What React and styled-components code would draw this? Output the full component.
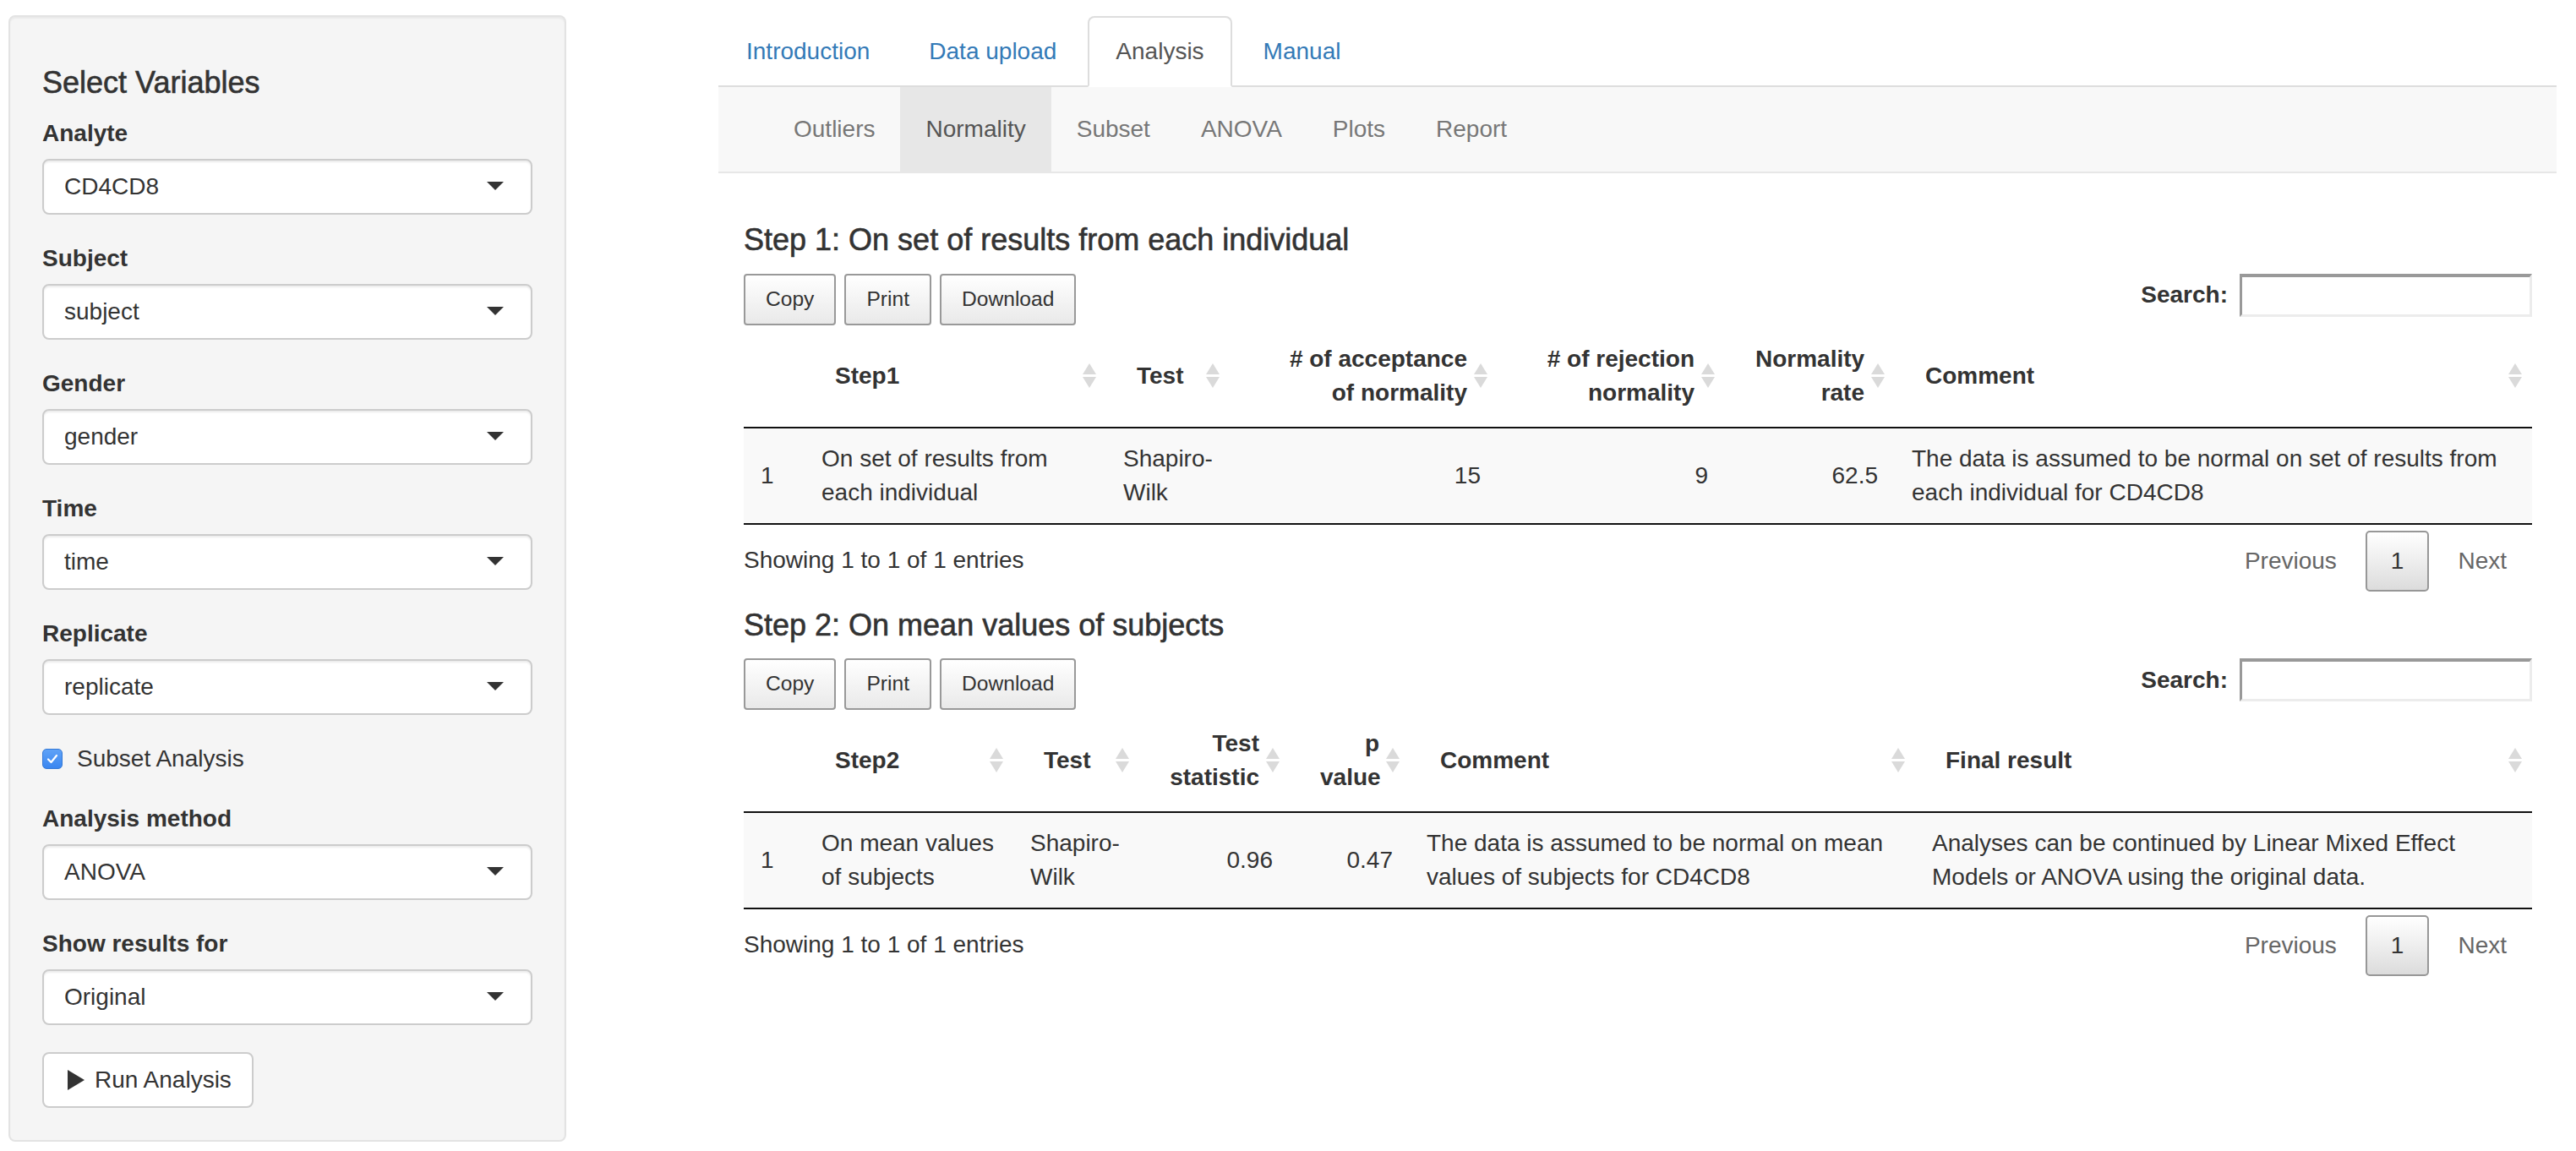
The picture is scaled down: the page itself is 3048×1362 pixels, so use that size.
import React from "react";
import styled, { createGlobalStyle, css } from "styled-components";

const GlobalStyle = createGlobalStyle`
  html, body { margin: 0; padding: 0; background: #fff; }
  body {
    font-family: "Liberation Sans", Arial, Helvetica, sans-serif;
    color: #333;
    font-size: 28px;
    line-height: 40px;
  }
  *, *::before, *::after { box-sizing: border-box; }
`;

const Page = styled.div`
  display: grid;
  grid-template-columns: 660px 1fr;
  column-gap: 180px;
  align-items: start;
  padding: 18px 23px 0 10px;
`;

/* ---------- Sidebar ---------- */
const Well = styled.aside`
  background: #f5f5f5;
  border: 2px solid #e3e3e3;
  border-radius: 8px;
  box-shadow: inset 0 2px 2px rgba(0, 0, 0, 0.05);
  padding: 38px;
`;

const headingStyle = css`
  font-size: 36px;
  font-weight: 500;
  line-height: 1.1;
  -webkit-text-stroke: 0.6px currentColor;
`;

const PanelTitle = styled.h4`
  margin: 20px 0 20px;
  ${headingStyle}
`;

const FormGroup = styled.div`
  margin-bottom: 32px;
`;

const FieldLabel = styled.label`
  display: block;
  font-weight: 700;
  line-height: 40px;
  margin-bottom: 10px;
`;

const SelectBox = styled.div`
  position: relative;
  display: flex;
  align-items: center;
  height: 66px;
  padding: 0 24px;
  background: #fff;
  border: 2px solid #ccc;
  border-radius: 8px;
  box-shadow: inset 0 2px 2px rgba(0, 0, 0, 0.075);
  color: #333;
`;

const Caret = styled.span`
  position: absolute;
  right: 32px;
  top: 50%;
  margin-top: -6px;
  width: 0;
  height: 0;
  border-style: solid;
  border-width: 10px 10px 0 10px;
  border-color: #333 transparent transparent transparent;
`;

const CheckRow = styled.label`
  display: flex;
  align-items: center;
  gap: 17px;
  height: 40px;
  margin-bottom: 31px;
`;

const CheckBox = styled.span`
  display: inline-flex;
  align-items: center;
  justify-content: center;
  width: 24px;
  height: 24px;
  border-radius: 5px;
  background: linear-gradient(to bottom, #5fa2f7, #3a86f0);
  border: 1px solid #3579d6;
`;

const ActionButton = styled.button`
  display: inline-flex;
  align-items: center;
  height: 66px;
  padding: 0 24px;
  background: #fff;
  border: 2px solid #ccc;
  border-radius: 8px;
  color: #333;
  font-family: inherit;
  font-size: 28px;
  line-height: 40px;
`;

const PlayIcon = styled.svg`
  width: 28px;
  height: 28px;
  margin-right: 8px;
  fill: #333;
`;

/* ---------- Main ---------- */
const Main = styled.main`
  display: flex;
  flex-direction: column;
  min-width: 0;
`;

const TabBar = styled.ul`
  display: flex;
  list-style: none;
  margin: 1px 0 0;
  padding: 0;
  border-bottom: 2px solid #ddd;
`;

const TabItem = styled.li`
  margin-bottom: -2px;
  margin-right: 4px;
`;

const TabLink = styled.a`
  display: block;
  padding: 20px 31px;
  line-height: 40px;
  border: 2px solid transparent;
  border-radius: 8px 8px 0 0;
  color: #337ab7;
  text-decoration: none;
  ${(p) =>
    p.$active &&
    css`
      color: #555;
      background: #fff;
      border-color: #ddd #ddd transparent;
    `}
`;

const SubNav = styled.ul`
  display: flex;
  list-style: none;
  margin: 0;
  padding: 0 0 0 59px;
  background: #f8f8f8;
  border-bottom: 2px solid #e7e7e7;
`;

const SubNavLink = styled.a`
  display: block;
  padding: 30px;
  line-height: 40px;
  color: #777;
  text-decoration: none;
  ${(p) =>
    p.$active &&
    css`
      color: #555;
      background: #e7e7e7;
    `}
`;

const Content = styled.div`
  padding: 39px 29px 0 30px;
`;

const SectionTitle = styled.h4`
  margin: 20px 0 20px;
  ${headingStyle}
`;

const Toolbar = styled.div`
  display: flex;
  justify-content: space-between;
  align-items: flex-start;
`;

const ButtonGroup = styled.div`
  display: flex;
  gap: 10px;
`;

const DtButton = styled.button`
  height: 61px;
  padding: 0 24px;
  font-family: inherit;
  font-size: 24.6px;
  line-height: 1;
  color: #333;
  border: 2px solid #999;
  border-radius: 4px;
  background: linear-gradient(to bottom, #ffffff 0%, #e9e9e9 100%);
`;

const SearchLabel = styled.label`
  display: flex;
  align-items: center;
  font-weight: 700;
  height: 51px;
`;

const SearchInput = styled.input`
  width: 346px;
  height: 51px;
  margin-left: 14px;
  background: #fff;
  border-style: solid;
  border-width: 4px 3px 3px 3px;
  border-color: #999 #ececec #ececec #999;
  font-family: inherit;
  font-size: 28px;
  outline: none;
`;

const DataTable = styled.table`
  width: 100%;
  table-layout: fixed;
  border-collapse: separate;
  border-spacing: 0;
`;

const HeadCell = styled.th`
  position: relative;
  padding: 20px 36px;
  font-weight: 700;
  line-height: 40px;
  text-align: ${(p) => p.$align};
  vertical-align: middle;
  white-space: nowrap;
  border-bottom: 2px solid #111;
  ${(p) =>
    p.$sortable &&
    css`
      &::before,
      &::after {
        content: "";
        position: absolute;
        right: 12px;
        width: 0;
        height: 0;
        border-left: 8.5px solid transparent;
        border-right: 8.5px solid transparent;
      }
      &::before {
        top: calc(50% - 15px);
        border-bottom: 13px solid #dadada;
      }
      &::after {
        top: calc(50% + 1px);
        border-top: 13px solid #dadada;
      }
    `}
`;

const BodyCell = styled.td`
  padding: 16px 20px;
  line-height: 40px;
  text-align: ${(p) => p.$align};
  vertical-align: middle;
  background: #f9f9f9;
  border-bottom: 2px solid #111;
`;

const FooterBar = styled.div`
  display: flex;
  justify-content: space-between;
  align-items: flex-start;
`;

const Info = styled.div`
  padding-top: 22px;
  line-height: 40px;
`;

const Pager = styled.div`
  display: flex;
  gap: 4px;
  padding-top: 7px;
`;

const PageButton = styled.a`
  display: block;
  padding: 14px 28px;
  line-height: 40px;
  border: 2px solid transparent;
  border-radius: 5px;
  color: #666;
  text-decoration: none;
  ${(p) =>
    p.$current &&
    css`
      color: #333;
      border-color: #979797;
      background: linear-gradient(to bottom, #ffffff 0%, #dcdcdc 100%);
    `}
`;

/* ---------- Data ---------- */
const selects = [
  { label: "Analyte", value: "CD4CD8" },
  { label: "Subject", value: "subject" },
  { label: "Gender", value: "gender" },
  { label: "Time", value: "time" },
  { label: "Replicate", value: "replicate" },
];

const selectsAfter = [
  { label: "Analysis method", value: "ANOVA" },
  { label: "Show results for", value: "Original" },
];

const tabs = ["Introduction", "Data upload", "Analysis", "Manual"];
const subTabs = ["Outliers", "Normality", "Subset", "ANOVA", "Plots", "Report"];

const tables = [
  {
    title: "Step 1: On set of results from each individual",
    widths: [72, 357, 146, 317, 269, 201, 754],
    headers: [
      { lines: [""], align: "left", sortable: false },
      { lines: ["Step1"], align: "left", sortable: true },
      { lines: ["Test"], align: "left", sortable: true },
      { lines: ["# of acceptance", "of normality"], align: "right", sortable: true },
      { lines: ["# of rejection", "normality"], align: "right", sortable: true },
      { lines: ["Normality", "rate"], align: "right", sortable: true },
      { lines: ["Comment"], align: "left", sortable: true },
    ],
    row: [
      ["1", "left"],
      ["On set of results from each individual", "left"],
      ["Shapiro-Wilk", "left"],
      ["15", "right"],
      ["9", "right"],
      ["62.5", "right"],
      ["The data is assumed to be normal on set of results from each individual for CD4CD8", "left"],
    ],
  },
  {
    title: "Step 2: On mean values of subjects",
    widths: [72, 247, 149, 178, 142, 598, 730],
    headers: [
      { lines: [""], align: "left", sortable: false },
      { lines: ["Step2"], align: "left", sortable: true },
      { lines: ["Test"], align: "left", sortable: true },
      { lines: ["Test", "statistic"], align: "right", sortable: true },
      { lines: ["p", "value"], align: "right", sortable: true },
      { lines: ["Comment"], align: "left", sortable: true },
      { lines: ["Final result"], align: "left", sortable: true },
    ],
    row: [
      ["1", "left"],
      ["On mean values of subjects", "left"],
      ["Shapiro-Wilk", "left"],
      ["0.96", "right"],
      ["0.47", "right"],
      ["The data is assumed to be normal on mean values of subjects for CD4CD8", "left"],
      ["Analyses can be continued by Linear Mixed Effect Models or ANOVA using the original data.", "left"],
    ],
  },
];

/* ---------- Pieces ---------- */
function SelectField({ label, value }) {
  return (
    <FormGroup>
      <FieldLabel>{label}</FieldLabel>
      <SelectBox>
        {value}
        <Caret />
      </SelectBox>
    </FormGroup>
  );
}

function ResultTable({ table }) {
  return (
    <section>
      <SectionTitle>{table.title}</SectionTitle>
      <Toolbar>
        <ButtonGroup>
          <DtButton>Copy</DtButton>
          <DtButton>Print</DtButton>
          <DtButton>Download</DtButton>
        </ButtonGroup>
        <SearchLabel>
          Search:
          <SearchInput type="search" />
        </SearchLabel>
      </Toolbar>
      <DataTable>
        <colgroup>
          {table.widths.map((w, i) => (
            <col key={i} style={{ width: w }} />
          ))}
        </colgroup>
        <thead>
          <tr>
            {table.headers.map((h, i) => (
              <HeadCell key={i} $align={h.align} $sortable={h.sortable}>
                {h.lines.map((l, j) => (
                  <React.Fragment key={j}>
                    {j > 0 && <br />}
                    {l}
                  </React.Fragment>
                ))}
              </HeadCell>
            ))}
          </tr>
        </thead>
        <tbody>
          <tr>
            {table.row.map(([v, a], i) => (
              <BodyCell key={i} $align={a}>
                {v}
              </BodyCell>
            ))}
          </tr>
        </tbody>
      </DataTable>
      <FooterBar>
        <Info>Showing 1 to 1 of 1 entries</Info>
        <Pager>
          <PageButton>Previous</PageButton>
          <PageButton $current>1</PageButton>
          <PageButton>Next</PageButton>
        </Pager>
      </FooterBar>
    </section>
  );
}

export default function App() {
  return (
    <>
      <GlobalStyle />
      <Page>
        <Well>
          <PanelTitle>Select Variables</PanelTitle>
          {selects.map((s) => (
            <SelectField key={s.label} {...s} />
          ))}
          <CheckRow>
            <CheckBox>
              <svg width="16" height="16" viewBox="0 0 16 16">
                <path d="M3 8.5 L6.5 12 L13 4" fill="none" stroke="#fff" strokeWidth="2.2" strokeLinecap="round" strokeLinejoin="round" />
              </svg>
            </CheckBox>
            Subset Analysis
          </CheckRow>
          {selectsAfter.map((s) => (
            <SelectField key={s.label} {...s} />
          ))}
          <ActionButton>
            <PlayIcon viewBox="0 0 28 28">
              <polygon points="4,2 24,14 4,26" />
            </PlayIcon>
            Run Analysis
          </ActionButton>
        </Well>
        <Main>
          <TabBar>
            {tabs.map((t) => (
              <TabItem key={t}>
                <TabLink $active={t === "Analysis"}>{t}</TabLink>
              </TabItem>
            ))}
          </TabBar>
          <SubNav>
            {subTabs.map((t) => (
              <li key={t}>
                <SubNavLink $active={t === "Normality"}>{t}</SubNavLink>
              </li>
            ))}
          </SubNav>
          <Content>
            {tables.map((t) => (
              <ResultTable key={t.title} table={t} />
            ))}
          </Content>
        </Main>
      </Page>
    </>
  );
}
